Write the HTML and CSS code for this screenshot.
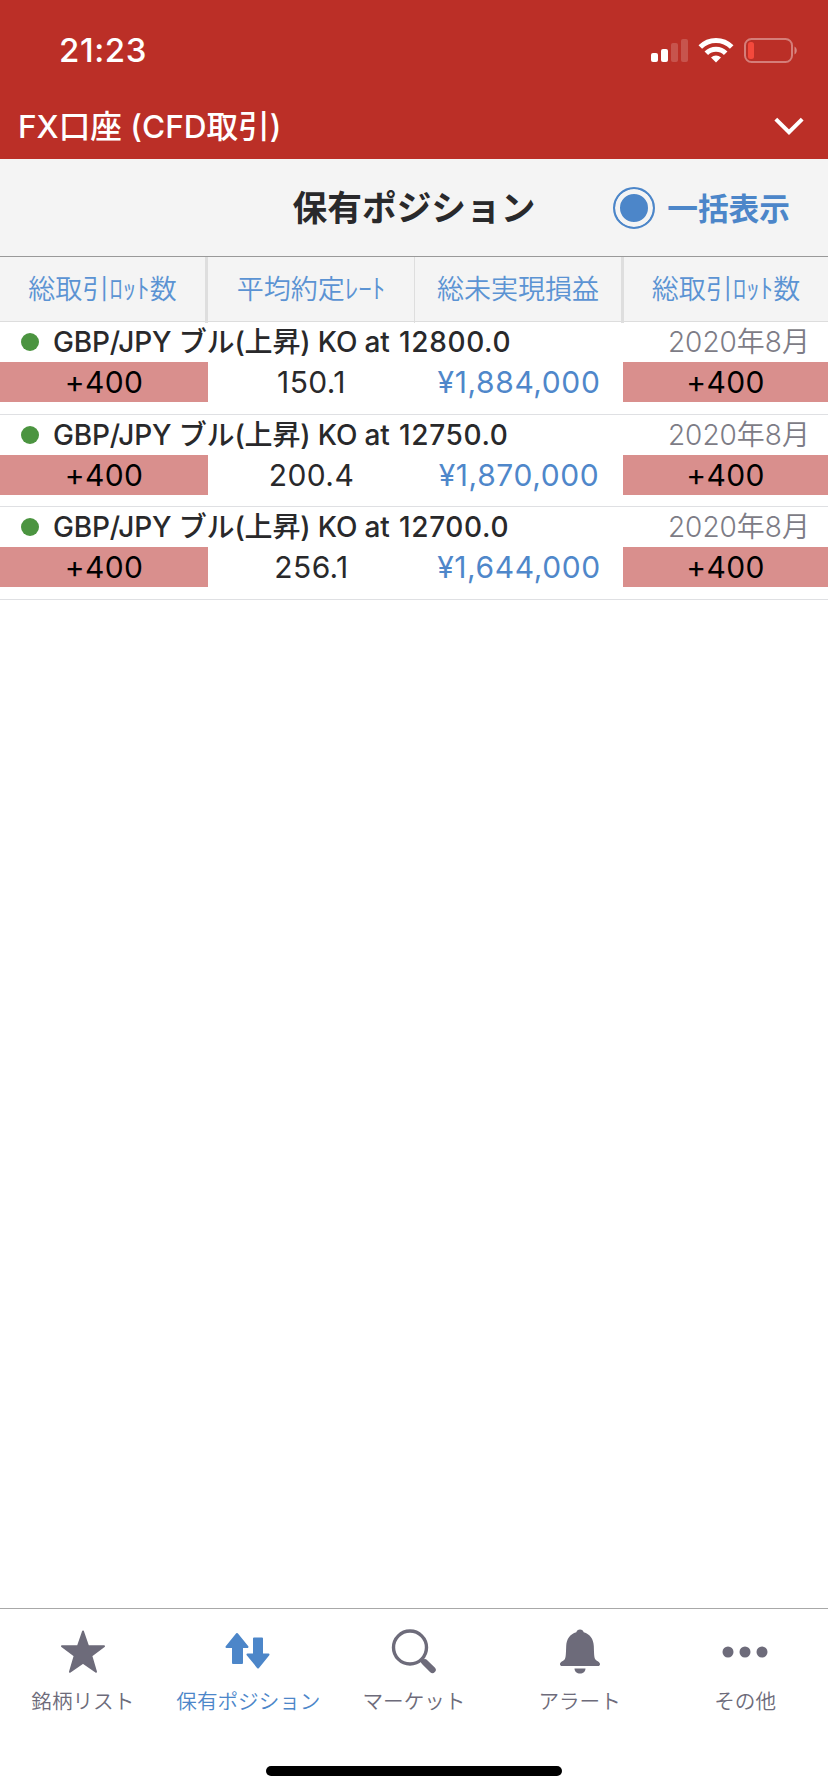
FILE: index.html
```html
<!DOCTYPE html>
<html lang="ja">

<head>
	<meta charset="UTF-8">
	<title>保有ポジション</title>
	<link rel="stylesheet" href="styles.css">
</head>

<body>

	<header class="top">
		<div class="status">
			<span class="time">21:23</span>
			<svg class="status-icons" width="148" height="28" viewBox="0 0 148 28">
				<!-- 電波 -->
				<rect x="0" y="16" width="7" height="9" rx="2" fill="#fff" />
				<rect x="10" y="12" width="7" height="13" rx="2" fill="#fff" />
				<rect x="20" y="6" width="7" height="19" rx="2" fill="#fff" fill-opacity=".18" />
				<rect x="30" y="2" width="7" height="23" rx="2" fill="#fff" fill-opacity=".18" />
				<!-- Wi-Fi -->
				<g fill="none" stroke="#fff" stroke-width="5">
					<path d="M49.300 10a22 22 0 0 1 31.400 0" />
					<path d="M55.300 16.200a13.700 13.700 0 0 1 19.400 0" />
				</g>
				<path d="M60 20.500a7.400 7.400 0 0 1 10 0L65 25.500z" fill="#fff" />
				<!-- 電池 -->
				<rect x="94" y="2" width="47" height="23" rx="6.500" fill="none" stroke="#fff" stroke-opacity=".38" stroke-width="2" />
				<rect x="97" y="5" width="6" height="17" rx="2.500" fill="#f4493c" />
				<path d="M143.500 9.500v8c3-1.500 3-6.500 0-8z" fill="#fff" fill-opacity=".42" />
			</svg>
		</div>
		<div class="account">
			<span>FX口座 (CFD取引)</span>
			<svg class="arrow" width="30" height="20" viewBox="0 0 30 20">
				<path d="M1.800 2.200L15 15.200 28.200 2.200" fill="none" stroke="#fff" stroke-width="4" />
			</svg>
		</div>
	</header>

	<div class="title-bar">
		<h1>保有ポジション</h1>
		<label class="all">
			<span class="radio"></span>
			<span class="all-text">一括表示</span>
		</label>
	</div>

	<div class="cols">
		<div>総取引ﾛｯﾄ数</div>
		<div>平均約定ﾚｰﾄ</div>
		<div>総未実現損益</div>
		<div>総取引ﾛｯﾄ数</div>
	</div>

	<ul class="list">
		<li class="item">
			<div class="item-head">
				<span class="dot"></span>
				<span class="name">GBP/JPY ブル(上昇) KO at <span class="ko">12800.0</span></span>
				<span class="month">2020年8月</span>
			</div>
			<div class="item-data">
				<span class="lot">+400</span>
				<span>150.1</span>
				<span class="profit">¥1,884,000</span>
				<span class="lot">+400</span>
			</div>
		</li>
		<li class="item">
			<div class="item-head">
				<span class="dot"></span>
				<span class="name">GBP/JPY ブル(上昇) KO at <span class="ko">12750.0</span></span>
				<span class="month">2020年8月</span>
			</div>
			<div class="item-data">
				<span class="lot">+400</span>
				<span>200.4</span>
				<span class="profit">¥1,870,000</span>
				<span class="lot">+400</span>
			</div>
		</li>
		<li class="item">
			<div class="item-head">
				<span class="dot"></span>
				<span class="name">GBP/JPY ブル(上昇) KO at <span class="ko">12700.0</span></span>
				<span class="month">2020年8月</span>
			</div>
			<div class="item-data">
				<span class="lot">+400</span>
				<span>256.1</span>
				<span class="profit">¥1,644,000</span>
				<span class="lot">+400</span>
			</div>
		</li>
	</ul>

	<nav class="tabs">
		<a class="tab">
			<svg width="46" height="46" viewBox="0 0 46 46">
				<path d="M23 2.500l5 14.500 16 .2-12.700 9.600 4.700 16L23 33.600 10 42.800l4.700-16L2 17.200l16-.2z" fill="currentColor" stroke="currentColor" stroke-width="2" stroke-linejoin="round" />
			</svg>
			<span>銘柄リスト</span>
		</a>
		<a class="tab on">
			<svg width="46" height="46" viewBox="0 0 46 46">
				<g fill="currentColor" stroke="currentColor" stroke-width="2" stroke-linejoin="round">
					<path d="M12 5L22.500 18H17v16H8V18H1.500z" />
					<path d="M29 9.500h8v16h6.500L33 38.500 22.500 25.500H29z" />
				</g>
			</svg>
			<span>保有ポジション</span>
		</a>
		<a class="tab">
			<svg width="46" height="46" viewBox="0 0 46 46">
				<circle cx="19" cy="18.500" r="16.500" fill="none" stroke="currentColor" stroke-width="3.400" />
				<path d="M30 30.500l3 3" stroke="currentColor" stroke-width="4.500" />
				<path d="M34 33.500l7.500 7.300" stroke="currentColor" stroke-width="6.500" stroke-linecap="round" />
			</svg>
			<span>マーケット</span>
		</a>
		<a class="tab">
			<svg width="46" height="46" viewBox="0 0 46 46">
				<path d="M23 .5c2 0 3.300 1.200 3.700 2.700C33 5 36.500 10 36.800 17c.3 8 .2 11 1.500 13.300 1.200 2 4.700 2.500 4.700 4.900 0 1.200-.9 1.800-2 1.800H5c-1.100 0-2-.6-2-1.800 0-2.400 3.500-2.900 4.700-4.900C9 28 8.900 25 9.200 17 9.500 10 13 5 19.300 3.200 19.700 1.700 21 .5 23 .5z" fill="currentColor" />
				<path d="M17.500 39.500h11c0 3-2.500 5-5.500 5s-5.500-2-5.500-5z" fill="currentColor" />
			</svg>
			<span>アラート</span>
		</a>
		<a class="tab">
			<svg width="46" height="46" viewBox="0 0 46 46">
				<g fill="currentColor">
					<circle cx="6" cy="23" r="5.500" />
					<circle cx="23" cy="23" r="5.500" />
					<circle cx="40" cy="23" r="5.500" />
				</g>
			</svg>
			<span>その他</span>
		</a>
	</nav>
	<div class="home"></div>

</body>

</html>
```

FILE: styles.css
```css
* {
	margin: 0;
	padding: 0;
	box-sizing: border-box;
}

body {
	display: flex;
	flex-direction: column;
	height: 1792px;
	background: #fff;
	color: #29292b;
	font-family: Inter, "Noto Sans CJK JP", sans-serif;
}

.top {
	height: 159px;
	background: #bb2f27;
	color: #fff;
}

.status {
	display: flex;
	justify-content: space-between;
	height: 96px;
	padding: 30px 28px 0 59px;
}

.time {
	font-size: 33px;
	line-height: 40px;
	font-weight: 500;
	letter-spacing: .6px;
}

.status-icons {
	margin-top: 7px;
	margin-right: 1px;
}

.account {
	display: flex;
	align-items: center;
	justify-content: space-between;
	height: 62px;
	padding: 0 24px 0 18px;
	font-size: 31.6px;
	font-weight: 500;
}

.account span {
	margin-top: -6px;
}

.title-bar {
	display: grid;
	grid-template-columns: 1fr auto 1fr;
	align-items: center;
	height: 98px;
	background: #f4f4f4;
	border-bottom: 1px solid #999;
}

.title-bar h1 {
	grid-column: 2;
	font-size: 34.7px;
	line-height: 50px;
	font-weight: 600;
}

.all {
	display: flex;
	align-items: center;
	justify-self: end;
	margin-right: 38px;
	color: #4c86c9;
	font-size: 30.7px;
	font-weight: 600;
}

.all-text {
	margin-top: -3px;
}

.radio {
	width: 42px;
	height: 42px;
	margin-right: 12px;
	border: 2px solid #4c86c9;
	border-radius: 50%;
	background: #4c86c9;
	box-shadow: inset 0 0 0 5px #f4f4f4;
}

.cols {
	display: grid;
	grid-template-columns: 208px 207px 209px 204px;
	height: 65px;
	background: #f4f4f4;
	border-bottom: 1px solid #ddd;
	color: #5b93d3;
	font-size: 27px;
	font-weight: 350;
	line-height: 66px;
	text-align: center;
}

.cols div {
	border-right: 3px solid #dedede;
}

.cols div:nth-child(2) {
	border-right-width: 1px;
}

.cols div:last-child {
	border-right: none;
}

.list {
	flex: 1;
	list-style: none;
}

.item {
	height: 92.6px;
	border-bottom: 1px solid #dfe0e3;
}

.item-head {
	display: flex;
	align-items: center;
	height: 40px;
	padding: 0 18px 0 21px;
	font-size: 28px;
	line-height: 40px;
}

.dot {
	width: 18px;
	height: 18px;
	margin-right: 14px;
	border-radius: 50%;
	background: #4b9440;
}

.name {
	font-weight: 500;
	letter-spacing: -.15px;
}

.ko {
	margin-left: 2px;
	letter-spacing: .65px;
}

.month {
	margin-left: auto;
	color: #7d7c86;
	font-weight: 350;
}

.item-data {
	display: grid;
	grid-template-columns: 208px 207px 208px 205px;
	height: 40px;
	font-size: 30px;
	line-height: 40px;
	text-align: center;
	letter-spacing: .4px;
}

.lot {
	background: #d98f8d;
	color: #000;
}

.profit {
	color: #4f87ca;
	letter-spacing: .6px;
}

.tabs {
	display: flex;
	height: 136px;
	border-top: 1px solid #a8a8a8;
}

.tab {
	display: flex;
	flex: 1;
	flex-direction: column;
	align-items: center;
	padding-top: 20px;
	color: #6d6b7a;
	font-size: 20.6px;
	font-weight: 350;
	line-height: 30px;
}

.tab span {
	margin-top: 12px;
	white-space: nowrap;
}

.on {
	color: #4c86c9;
}

.home {
	width: 296px;
	height: 10px;
	margin: 22px auto 16px;
	border-radius: 5px;
	background: #000;
}
```
